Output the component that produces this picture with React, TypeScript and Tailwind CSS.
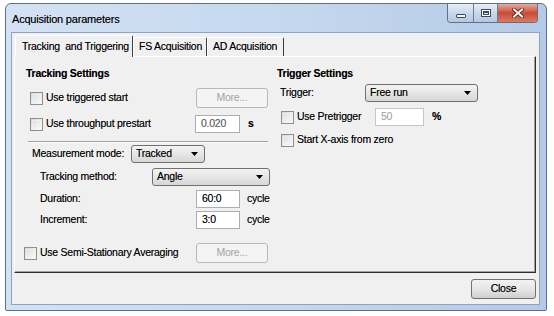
import React from "react";

const FONT = { fontFamily: '"Liberation Sans", Arial, sans-serif' };

function Checkbox() {
  return (
    <div className="w-[13px] h-[13px] shrink-0 border border-[#8e8f8f] bg-gradient-to-br from-[#d6d6d6] via-[#ececec] to-[#fafafa] p-[1px]">
      <div className="w-full h-full border border-[#f4f4f4]/60" />
    </div>
  );
}

function Arrow() {
  return (
    <svg width="7" height="4" viewBox="0 0 7 4" className="shrink-0">
      <polygon points="0,0 7,0 3.5,4" fill="#000" />
    </svg>
  );
}

function MoreButton() {
  return (
    <div className="w-[72px] h-[20px] shrink-0 flex items-center justify-center rounded-[3px] border border-[#b5b9bd] bg-[#f4f4f4] text-[#a3a3a3] [text-shadow:none]">
      More...
    </div>
  );
}

const SELECT =
  "h-[18px] flex items-center pl-[4px] pr-[6px] rounded-[3px] border border-[#707070] bg-gradient-to-b from-[#f3f3f3] via-[#e6e6e6] to-[#d6d6d6]";

export default function App() {
  return (
    <div
      className="w-[554px] h-[316px] bg-white overflow-hidden text-[10.5px] tracking-[-0.25px] text-black [text-shadow:0_0_0.5px_rgba(0,0,0,0.45)]"
      style={FONT}
    >
      <div className="ml-[5px] mt-[3px] w-[542px] h-[308px] rounded-t-[6px] rounded-b-[2px] border border-[#5e7088] bg-gradient-to-r from-[#d3e2f4] via-[#c5d8ee] to-[#b4cae6] flex flex-col">
        {/* Title bar */}
        <div className="h-[28px] flex items-start justify-between pl-[6px] pr-[8px] shrink-0">
          <div className="pt-[8px] leading-[14px] text-[11px] tracking-[-0.2px]">Acquisition parameters</div>
          <div className="flex h-[19px] rounded-b-[4px] border border-t-0 border-[#5f718a] overflow-hidden [text-shadow:none]">
            <div className="w-[26px] h-full flex items-center justify-center bg-gradient-to-b from-[#e7eef7] via-[#c9d8ea] to-[#b6c8df] border-r border-[#6b7d95]">
              <div className="mt-[6px] w-[10px] h-[4px] bg-white border border-[#3a4a5f] rounded-[1px]" />
            </div>
            <div className="w-[24px] h-full flex items-center justify-center bg-gradient-to-b from-[#e7eef7] via-[#c9d8ea] to-[#b6c8df] border-r border-[#6b7d95]">
              <div className="w-[10px] h-[8px] border border-[#3a4a5f] bg-white p-[1px]">
                <div className="w-full h-full border border-[#3a4a5f] border-t-2 bg-[#e8eef6]" />
              </div>
            </div>
            <div className="w-[39px] h-full flex items-center justify-center bg-gradient-to-b from-[#e9a99c] via-[#c94a38] to-[#d77a63]">
              <svg width="12" height="10" viewBox="0 0 12 10">
                <path d="M2 1.5 L10 8.5 M10 1.5 L2 8.5" stroke="#5a1a12" strokeWidth="3.6" strokeLinecap="square" />
                <path d="M2 1.5 L10 8.5 M10 1.5 L2 8.5" stroke="#ffffff" strokeWidth="2" strokeLinecap="square" />
              </svg>
            </div>
          </div>
        </div>

        {/* Client area */}
        <div className="ml-[5px] w-[529px] h-[273px] border border-[#8ea3bd] bg-[#f0f0f0] flex flex-col">
          {/* Tabs */}
          <div className="mt-[2px] ml-[3px] h-[21px] flex items-start relative z-10">
            <div className="w-[118px] h-[22px] flex items-center pl-[6px] whitespace-pre border-l border-t border-white border-r border-r-[#3c3c3c] rounded-t-[2px] bg-[#f0f0f0]">
              {"Tracking  and Triggering"}
            </div>
            <div className="mt-[2px] w-[74px] h-[19px] flex items-center pl-[5px] border-l border-t border-white border-r border-r-[#3c3c3c] rounded-t-[2px]">
              FS Acquisition
            </div>
            <div className="mt-[2px] w-[77px] h-[19px] flex items-center pl-[5px] border-l border-t border-white border-r border-r-[#3c3c3c] rounded-t-[2px]">
              AD Acquisition
            </div>
          </div>

          {/* Panel */}
          <div className="ml-[2px] w-[522px] h-[217px] border-t border-l border-white border-r border-b border-r-[#2e2e2e] border-b-[#2e2e2e] shadow-[inset_-1px_-1px_0_#a0a0a0] flex">
            {/* Left column */}
            <div className="w-[261px] flex flex-col">
              <div className="mt-[8px] ml-[11px] h-[16px] leading-[16px] font-bold">Tracking Settings</div>

              <div className="mt-[7px] ml-[15px] h-[20px] flex items-center">
                <Checkbox />
                <span className="ml-[3px] w-[150px]">Use triggered start</span>
                <MoreButton />
              </div>

              <div className="mt-[7px] ml-[15px] h-[18px] flex items-center">
                <Checkbox />
                <span className="ml-[3px] w-[149px]">Use throughput prestart</span>
                <div className="w-[45px] h-[18px] flex items-center pl-[5px] bg-white border border-[#abadb3] text-[#6d6d6d]">0.020</div>
                <span className="ml-[8px] font-bold">s</span>
              </div>

              <div className="mt-[8px] ml-[13px] w-[240px] h-[2px] border-t border-[#a0a0a0] border-b border-b-white" />

              <div className="mt-[2px] ml-[17px] h-[18px] flex items-center">
                <span className="w-[99px]">Measurement mode:</span>
                <div className={`w-[74px] ${SELECT}`}>
                  <span className="flex-1">Tracked</span>
                  <Arrow />
                </div>
              </div>

              <div className="mt-[5px] ml-[25px] h-[18px] flex items-center">
                <span className="w-[112px]">Tracking method:</span>
                <div className={`w-[118px] ${SELECT}`}>
                  <span className="flex-1">Angle</span>
                  <Arrow />
                </div>
              </div>

              <div className="mt-[4px] ml-[25px] h-[18px] flex items-center">
                <span className="w-[156px]">Duration:</span>
                <div className="w-[44px] h-[18px] flex items-center pl-[5px] bg-white border border-[#abadb3]">60:0</div>
                <span className="ml-[7px]">cycle</span>
              </div>

              <div className="mt-[3px] ml-[25px] h-[18px] flex items-center">
                <span className="w-[156px]">Increment:</span>
                <div className="w-[44px] h-[18px] flex items-center pl-[5px] bg-white border border-[#abadb3]">3:0</div>
                <span className="ml-[7px]">cycle</span>
              </div>

              <div className="mt-[14px] ml-[9px] h-[20px] flex items-center">
                <Checkbox />
                <span className="ml-[3px] w-[156px]">Use Semi-Stationary Averaging</span>
                <MoreButton />
              </div>
            </div>

            {/* Right column */}
            <div className="flex-1 flex flex-col">
              <div className="mt-[8px] ml-[1px] h-[16px] leading-[16px] font-bold">Trigger Settings</div>

              <div className="mt-[3px] ml-[4px] h-[18px] flex items-center">
                <span className="w-[85px]">Trigger:</span>
                <div className={`w-[113px] ${SELECT}`}>
                  <span className="flex-1">Free run</span>
                  <Arrow />
                </div>
              </div>

              <div className="mt-[6px] ml-[5px] h-[18px] flex items-center">
                <Checkbox />
                <span className="ml-[3px] w-[78px]">Use Pretrigger</span>
                <div className="w-[49px] h-[18px] flex items-center pl-[5px] bg-white border border-[#c4c6ca] text-[#9a9a9a] [text-shadow:none]">50</div>
                <span className="ml-[8px] font-bold">%</span>
              </div>

              <div className="mt-[5px] ml-[5px] h-[18px] flex items-center">
                <Checkbox />
                <span className="ml-[3px]">Start X-axis from zero</span>
              </div>
            </div>
          </div>

          {/* Footer */}
          <div className="ml-[2px] w-[522px] mt-[6px] flex justify-end">
            <div className="w-[65px] h-[20px] flex items-center justify-center rounded-[3px] border border-[#707070] bg-gradient-to-b from-[#f2f2f2] via-[#e6e6e6] to-[#cfcfcf]">
              Close
            </div>
          </div>
        </div>
      </div>
    </div>
  );
}
